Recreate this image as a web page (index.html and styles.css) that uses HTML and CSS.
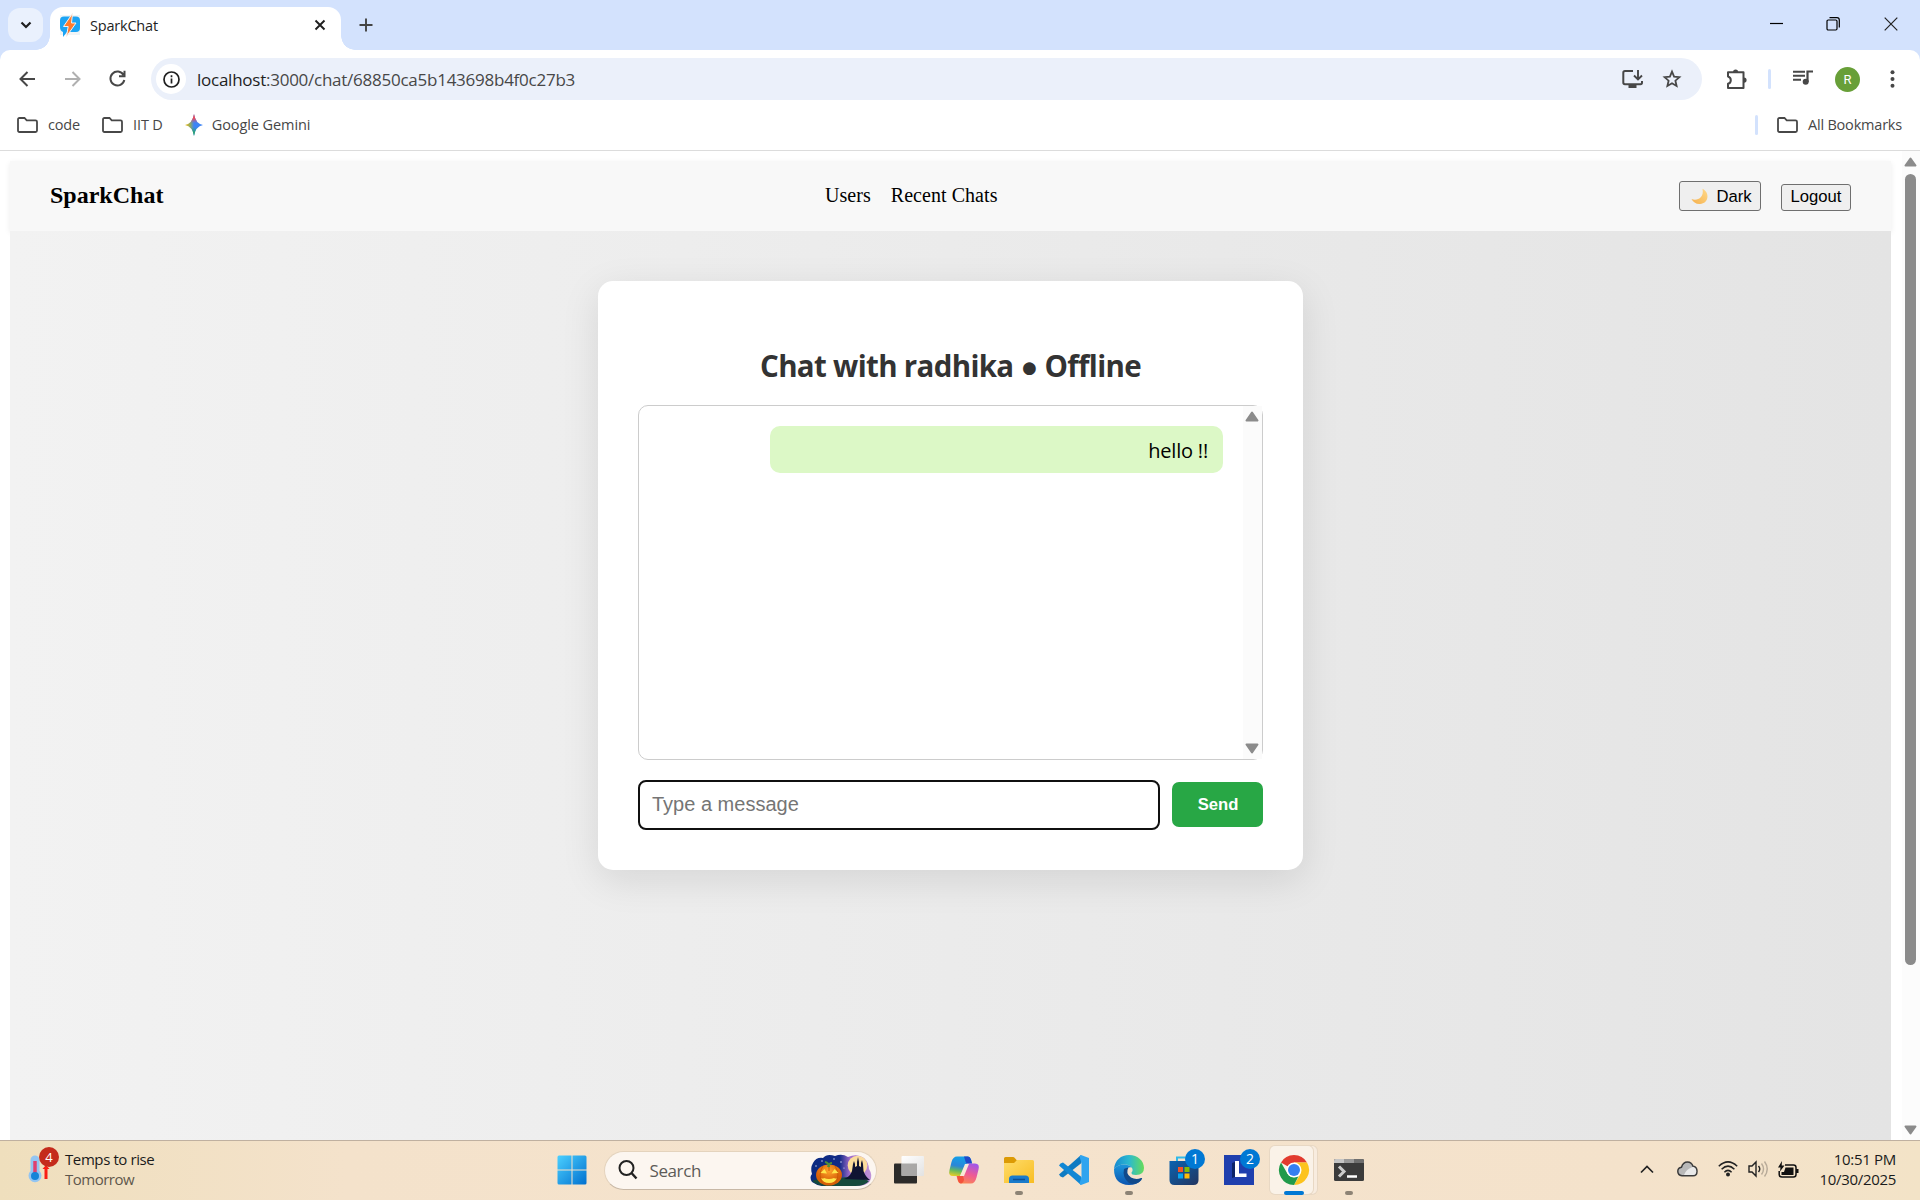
FILE: index.html
```html
<!DOCTYPE html>
<html lang="en">
<head>
<meta charset="utf-8">
<title>SparkChat</title>
<link rel="stylesheet" href="styles.css">
</head>
<body>
<header class="tabstrip">
  <button class="tab-search"><svg width="12" height="8" viewBox="0 0 12 8"><path d="M1.5 1.5 6 6l4.500-4.500" fill="none" stroke="#1f1f1f" stroke-width="2.200"/></svg></button>
  <div class="tab">
    <svg width="20" height="20" viewBox="0 0 20 20"><rect width="20" height="20" fill="#f0f4f6"/><path d="M4 1.500h12q4 0 4 4V13q0 4-4 4H7l-4 5V17Q0 16 0 12V5.500q0-4 4-4z" fill="#1ba4f5"/><path d="M12.500-1.500 3.500 11.500h4.700L6.500 21.500l9.500-13.500h-4.500z" fill="#ff7b2e" stroke="#f3f3f3" stroke-width="1"/></svg>
    <span class="tab-title">SparkChat</span>
    <svg class="tab-close" width="12" height="12" viewBox="0 0 12 12"><path d="M1.500 1.500l9 9m0-9-9 9" stroke="#1f1f1f" stroke-width="1.900"/></svg>
  </div>
  <svg class="tab-new" width="14" height="14" viewBox="0 0 14 14"><path d="M7 .500v13M.500 7h13" stroke="#444" stroke-width="1.900"/></svg>
  <div class="window-controls">
    <svg width="14" height="14" viewBox="0 0 14 14"><path d="M1 6.500h13" stroke="#000" stroke-width="1.200"/></svg>
    <svg width="14" height="14" viewBox="0 0 14 14"><rect x="1" y="3" width="10" height="10" rx="1.200" fill="none" stroke="#000" stroke-width="1.200"/><path d="M3.500.700H11q2.300 0 2.300 2.300v7.500" fill="none" stroke="#000" stroke-width="1.200"/></svg>
    <svg width="14" height="14" viewBox="0 0 14 14"><path d="M.700.700l12.600 12.600m0-12.600L.700 13.300" stroke="#222" stroke-width="1.200"/></svg>
  </div>
</header>

<div class="chrome">
  <div class="toolbar">
    <div class="nav-icons">
      <svg width="17" height="16" viewBox="0 0 17 16"><path d="M16 8H2M8.500 1 1.500 8l7 7" fill="none" stroke="#474747" stroke-width="2"/></svg>
      <svg width="17" height="16" viewBox="0 0 17 16"><path d="M1 8h14M8.500 1l7 7-7 7" fill="none" stroke="#b0b0b0" stroke-width="2"/></svg>
      <svg width="17" height="17" viewBox="0 0 17 17"><path d="M14.500 5A7 7 0 1 0 15.300 10M15.500.800V6.300H10" fill="none" stroke="#474747" stroke-width="2"/></svg>
    </div>
    <div class="omnibox">
      <span class="site-info"><svg width="17" height="17" viewBox="0 0 17 17"><circle cx="8.500" cy="8.500" r="7.500" fill="none" stroke="#1f1f1f" stroke-width="1.700"/><path d="M8.500 7.500v5M8.500 4.300v1.900" stroke="#1f1f1f" stroke-width="1.700"/></svg></span>
      <span class="url"><b>localhost</b>:3000/chat/68850ca5b143698b4f0c27b3</span>
      <svg class="install" width="21" height="20" viewBox="0 0 21 20"><path d="M11 2H3Q1.300 2 1.300 3.700V13.500Q1.300 15.300 3 15.300H18.500Q20 15.300 20 13.500V12" fill="none" stroke="#474747" stroke-width="2"/><path d="M6.500 16h8v3h-8z" fill="#474747"/><path d="M16 1v9M12 6.500l4 4 4-4" fill="none" stroke="#474747" stroke-width="1.900"/></svg>
      <svg class="star" width="20" height="20" viewBox="0 0 20 20"><path d="M10 2.600l2.100 5 5.300.500-4 3.600 1.200 5.300-4.600-2.800L5.400 17l1.200-5.300-4-3.600 5.300-.500z" fill="none" stroke="#474747" stroke-width="1.800"/></svg>
    </div>
    <svg class="puzzle" width="22" height="21" viewBox="0 0 22 21"><path d="M2 3.300H17.500V19H2V14.800Q4.800 14 4.800 11.200T2 7.500z" fill="none" stroke="#474747" stroke-width="2" stroke-linejoin="round"/><path d="M7 3a2.600 2.600 0 0 1 5.200 0zM18 8.500a2.600 2.600 0 0 1 0 5.200z" fill="#474747"/></svg>
    <i class="divider"></i>
    <svg class="media" width="20" height="16" viewBox="0 0 20 16"><path d="M0 1.700h12M0 5.700h12M0 9.700h8" stroke="#474747" stroke-width="1.900"/><path d="M14.500 12V1.500H20" fill="none" stroke="#474747" stroke-width="2.200"/><circle cx="12.700" cy="11.700" r="3" fill="#474747"/></svg>
    <span class="avatar">R</span>
    <svg class="kebab" width="5" height="18" viewBox="0 0 5 18"><g fill="#474747"><circle cx="2.500" cy="2.200" r="2"/><circle cx="2.500" cy="9" r="2"/><circle cx="2.500" cy="15.800" r="2"/></g></svg>
  </div>
  <nav class="bookmarks">
    <svg class="folder" width="21" height="16" viewBox="0 0 21 16"><path d="M1 2.500Q1 1 2.500 1H7.500l2.200 2.300H18.500Q20 3.300 20 4.800V13.500Q20 15 18.500 15h-16Q1 15 1 13.500z" fill="none" stroke="#474747" stroke-width="1.800"/></svg>
    <span class="bm bm-code">code</span>
    <svg class="folder" width="21" height="16" viewBox="0 0 21 16"><path d="M1 2.500Q1 1 2.500 1H7.500l2.200 2.300H18.500Q20 3.300 20 4.800V13.500Q20 15 18.500 15h-16Q1 15 1 13.500z" fill="none" stroke="#474747" stroke-width="1.800"/></svg>
    <span class="bm bm-iit">IIT D</span>
    <svg class="gemini" width="18" height="22" viewBox="0 0 18 22"><defs><linearGradient id="gem" x1="0" y1=".5" x2="1" y2=".5"><stop offset="0" stop-color="#fbbc05"/><stop offset=".3" stop-color="#8aa86a"/><stop offset=".5" stop-color="#3d84f5"/><stop offset="1" stop-color="#3d84f5"/></linearGradient><linearGradient id="gemv" x1="0" y1="0" x2="0" y2="1"><stop offset="0" stop-color="#f0434f"/><stop offset=".2" stop-color="#ee4a5a"/><stop offset=".42" stop-color="#b060a0" stop-opacity="0"/><stop offset=".6" stop-color="#27a566" stop-opacity="0"/><stop offset=".85" stop-color="#27a566"/></linearGradient></defs><path d="M9 0Q10.500 9.500 18 11 10.500 12.500 9 22 7.500 12.500 0 11 7.500 9.500 9 0z" fill="url(#gem)"/><path d="M9 0Q10.500 9.500 18 11 10.500 12.500 9 22 7.500 12.500 0 11 7.500 9.500 9 0z" fill="url(#gemv)"/></svg>
    <span class="bm bm-gemini">Google Gemini</span>
    <i class="divider"></i>
    <svg class="folder" width="21" height="16" viewBox="0 0 21 16"><path d="M1 2.500Q1 1 2.500 1H7.500l2.200 2.300H18.500Q20 3.300 20 4.800V13.500Q20 15 18.500 15h-16Q1 15 1 13.500z" fill="none" stroke="#474747" stroke-width="1.800"/></svg>
    <span class="bm bm-all">All Bookmarks</span>
  </nav>
</div>

<div class="viewport">
  <div class="page">
    <nav class="navbar">
      <div class="brand">SparkChat</div>
      <div class="links"><span>Users</span><span>Recent Chats</span></div>
      <div class="actions">
        <button class="btn btn-dark"><svg width="17" height="17" viewBox="0 0 17 17"><defs><linearGradient id="moon" x1="0" y1="1" x2="1" y2="0"><stop offset="0" stop-color="#f5b04c"/><stop offset="1" stop-color="#ffd98a"/></linearGradient></defs><path d="M11.500.800C19 4.500 18 15.500 9 16 5 16.200 2 14 .500 11c5 2 13-.500 11-10.200z" fill="url(#moon)"/></svg><span>Dark</span></button>
        <button class="btn btn-logout"><span>Logout</span></button>
      </div>
    </nav>
    <main class="stage">
      <section class="card">
        <h2>Chat with radhika ● Offline</h2>
        <div class="messages">
          <div class="list"><div class="bubble">hello !!</div></div>
          <div class="inner-scroll">
            <svg width="14" height="11" viewBox="0 0 14 11"><path d="M7 1.500 12.500 9.500h-11z" fill="#8b8b8b" stroke="#8b8b8b" stroke-width="2" stroke-linejoin="round"/></svg>
            <svg width="14" height="11" viewBox="0 0 14 11"><path d="M7 9.500 12.500 1.500h-11z" fill="#8b8b8b" stroke="#8b8b8b" stroke-width="2" stroke-linejoin="round"/></svg>
          </div>
        </div>
        <div class="composer">
          <div class="field">Type a message</div>
          <button class="send">Send</button>
        </div>
      </section>
    </main>
  </div>
  <div class="scrollbar">
    <svg width="13" height="10" viewBox="0 0 13 10"><path d="M6.500 1.500 11.500 8.500h-10z" fill="#8b8b8b" stroke="#8b8b8b" stroke-width="2" stroke-linejoin="round"/></svg>
    <i class="thumb"></i>
    <svg width="13" height="10" viewBox="0 0 13 10"><path d="M6.500 8.500 11.500 1.500h-10z" fill="#8b8b8b" stroke="#8b8b8b" stroke-width="2" stroke-linejoin="round"/></svg>
  </div>
</div>

<footer class="taskbar">
  <div class="weather">
    <div class="weather-icon">
      <svg width="24" height="30" viewBox="0 0 24 30"><path d="M2.500 6a4.500 4.500 0 0 1 9 0V17a6.500 6.500 0 1 1-9 0z" fill="#93c5f2"/><path d="M7 7v14" stroke="#e0406e" stroke-width="3.500"/><circle cx="7" cy="22" r="4" fill="#1684d8"/><path d="M18 14v11" stroke="#f91e14" stroke-width="3"/><path d="M14.500 15 18 11l3.500 4z" fill="#f91e14"/></svg>
      <span class="badge-red">4</span>
    </div>
    <div class="weather-text"><span class="w1">Temps to rise</span><span class="w2">Tomorrow</span></div>
  </div>
  <div class="apps">
    <div class="app"><svg width="30" height="30" viewBox="0 0 30 30"><defs><linearGradient id="win" x1="0" y1="0" x2="1" y2="1" gradientUnits="objectBoundingBox"><stop offset="0" stop-color="#4bd0ff"/><stop offset="1" stop-color="#0070cf"/></linearGradient></defs><path d="M2 .500h12.500v14H.500V2Q.500.500 2 .500zM15.500.500H28q1.500 0 1.500 1.500v12.500h-14zM.500 15.500h14v14H2q-1.500 0-1.500-1.500zM15.500 15.500h14V28q0 1.500-1.500 1.500H15.500z" fill="url(#win)"/></svg></div>
    <div class="search">
      <svg width="20" height="20" viewBox="0 0 20 20"><circle cx="8.500" cy="8" r="7" fill="none" stroke="#222" stroke-width="2"/><path d="M13.500 13l5 5.500" stroke="#222" stroke-width="2.400"/></svg>
      <span class="search-text">Search</span>
      <svg class="art" width="62" height="33" viewBox="0 0 62 33">
        <defs><linearGradient id="sky"><stop offset="0" stop-color="#0a2a80"/><stop offset=".48" stop-color="#122a86"/><stop offset=".65" stop-color="#a06ccc"/><stop offset="1" stop-color="#c092d8"/></linearGradient><radialGradient id="pump" cy=".3"><stop offset="0" stop-color="#ffa52a"/><stop offset="1" stop-color="#d85f08"/></radialGradient></defs>
        <path d="M3 9Q6 3 13 4 17-1 25 2 32-1 38 3 47-1 54 4q5 5 5 11 4 6 1 12-3 5-14 5H12q-6-1-10-4-3-5 0-8-2-6 1-11z" fill="url(#sky)"/>
        <circle cx="47.500" cy="11.500" r="9.800" fill="#fbdc9c"/>
        <path d="M2 27q14-6 28-3 16-3 29 3-4 5-14 5H14q-8-1-12-5z" fill="#164a3c"/>
        <path d="M34 25q6-2 8-8l1-7 1-3 1 3v3l2-1V8l1-5 1 5v4l2 1V9l1-3 1 4 .500 7q2 6 6.500 9z" fill="#101432"/>
        <g fill="#dfe7ff"><circle cx="6" cy="12" r=".7"/><circle cx="12" cy="7" r=".7"/><circle cx="24" cy="5" r=".7"/><circle cx="31" cy="8" r=".7"/><circle cx="34" cy="14" r=".6"/></g>
        <ellipse cx="19" cy="21" rx="13" ry="10.500" fill="url(#pump)"/>
        <path d="M13 12q-6 9 0 18M25 12q6 9 0 18M19 12v5" stroke="#c85a06" fill="none"/>
        <path d="M19 13q0-4-4-5M18 13q1-4 4-4" stroke="#4d8f3a" stroke-width="2" fill="none"/>
        <path d="M10.500 19l4-4 2.500 4.500zM21.500 19.500l3-4.500 4 4zM11 24q2 1 3 0 5 2 10 0 2 1 3 0-2 5-8 5t-8-5z" fill="#ffe54a"/>
      </svg>
    </div>
    <div class="app"><svg width="30" height="30" viewBox="0 0 30 30"><defs><linearGradient id="tv" x1="0" x2="1" y2="1"><stop offset="0" stop-color="#fff"/><stop offset="1" stop-color="#e2e2e2"/></linearGradient></defs><rect y="8.500" width="23" height="20" rx="1" fill="#2c2b2a"/><rect x="7.500" y="1" width="22.500" height="20" rx="1" fill="url(#tv)"/><path d="M7.500 8.500H23V21H7.500z" fill="#9c9b9a" opacity=".85"/></svg></div>
    <div class="app"><svg width="30" height="30" viewBox="0 0 30 30"><defs><linearGradient id="cp1" x1=".3" x2=".1" y2="1"><stop offset="0" stop-color="#159fe8"/><stop offset=".45" stop-color="#2a86d8"/><stop offset=".7" stop-color="#65b95e"/><stop offset="1" stop-color="#f3cf22"/></linearGradient><linearGradient id="cp2" x1=".7" x2=".3" y2="1"><stop offset="0" stop-color="#a256e8"/><stop offset=".5" stop-color="#ee5a95"/><stop offset="1" stop-color="#fb8850"/></linearGradient></defs><path d="M8 1.500h11q2 0 3 3l1 4h-5L11 21H4q-5 0-3.500-6l2-8Q4 1.500 8 1.500z" fill="url(#cp1)"/><path d="M15 1.500h4q2 0 3 3l1 4h-4q-2 0-2.500-2z" fill="#2049c8"/><path d="M22 28.500H12q-2.500 0-3.200-3L7.500 21H12L18.500 8.500H26q5 0 3.500 6l-2 8q-1.500 6-5.500 6z" fill="url(#cp2)"/><path d="M14 21h-6l1 4.500q1 3 3 3 2.500-.500 3-4z" fill="#f4523d"/><path d="M16 9h4l-5 12h-4z" fill="#fae9d8"/></svg></div>
    <div class="app"><svg width="30" height="30" viewBox="0 0 30 30"><defs><linearGradient id="fd" x2="1" y2="1"><stop offset="0" stop-color="#ffdc6a"/><stop offset="1" stop-color="#f8bd22"/></linearGradient></defs><path d="M0 3.500Q0 2 1.500 2H9q1 0 2 1.300L13 5.500V10H0z" fill="#dc9a05"/><path d="M0 8h10l3-3h15.500Q30 5 30 6.500V28H0z" fill="url(#fd)"/><path d="M5 28v-4q0-3.500 3.500-3.500h13q3.500 0 3.500 3.500v4z" fill="#1a7bcb"/><path d="M9 24.500h12" stroke="#0c4f95" stroke-width="1.500"/></svg><i class="dot"></i></div>
    <div class="app"><svg width="30" height="30" viewBox="0 0 30 30"><path d="M22 0 22.500 8 4 22.500 1.500 21.500 0 19.500z" fill="#0f7bc2"/><path d="M22 30 22.500 22 4 7.500 1.500 8.500 0 10.500z" fill="#1187d4"/><path d="M22 0 30 3V27L22 30 20.500 28.500 22.500 22V8L20.500 1.500z" fill="#2fa4ef"/></svg></div>
    <div class="app"><svg width="30" height="30" viewBox="0 0 30 30"><defs><linearGradient id="e1" x1="0" x2="1"><stop offset="0" stop-color="#1689d2"/><stop offset=".5" stop-color="#2cb9cf"/><stop offset="1" stop-color="#66dc5a"/></linearGradient><linearGradient id="e2" x2="0" y2="1"><stop offset="0" stop-color="#1c96dc"/><stop offset="1" stop-color="#0c55b0"/></linearGradient></defs><path d="M0 14C1 5 7 0 15 0 24 0 30 6 30 13q0 7-8 7-5 0-4.500-2.500Q19 16 18.500 14 17 9.500 10 9.500 4 9.500 0 14z" fill="url(#e1)"/><path d="M0 14q4-5 11-4.500 5 .500 7 3-6-1-6 5 1 8 9 9 4 0 7-2-5 5.500-13 5.500Q0 29.500 0 14z" fill="url(#e2)"/><path d="M10 14q-2 8 5 14 8 3 13-4 .500-1.500-1-1-5 2-10-.500-6-4-2.500-10Q11 13 10 14z" fill="#114a8b"/></svg><i class="dot"></i></div>
    <div class="app"><svg width="30" height="30" viewBox="0 0 30 30"><defs><linearGradient id="st" y2="1"><stop offset="0" stop-color="#0a63b0"/><stop offset="1" stop-color="#233560"/></linearGradient></defs><path d="M8 7V2.500H20" fill="none" stroke="#31b9e8" stroke-width="2"/><path d="M.500 6h29V25q0 5-5 5h-19q-5 0-5-5z" fill="url(#st)"/><path d="M9 12h5v5H9z" fill="#f35325"/><path d="M15.500 12h5v5h-5z" fill="#81bc06"/><path d="M9 18.500h5v5H9z" fill="#05a6f0"/><path d="M15.500 18.500h5v5h-5z" fill="#ffba08"/></svg><b class="badge">1</b></div>
    <div class="app"><svg width="30" height="30" viewBox="0 0 30 30"><path d="M0 0h30v30H0z" fill="#1f3fae"/><path d="M8 8l3-1v15l-3 1z" fill="#0c2467"/><path d="M11 6h4v12.500h7.500V22H11z" fill="#fff"/></svg><b class="badge">2</b></div>
    <div class="app app-active"><svg width="30" height="30" viewBox="0 0 30 30"><path d="M15 15 2 7.500A15 15 0 0 1 28 7.500H15z" fill="#e23a2e"/><path d="M15 7.500H28A15 15 0 0 1 15 30l6.500-11.200z" fill="#fcc31e"/><path d="M2 7.500l6.500 11.300q4 5.500 11 2.500L15 30A15 15 0 0 1 2 7.500z" fill="#219a4a"/><circle cx="15" cy="15" r="7.500" fill="#fff"/><circle cx="15" cy="15" r="6" fill="#347ff0"/></svg><i class="dot dot-active"></i></div>
    <div class="app"><svg width="30" height="30" viewBox="0 0 30 30"><rect y="4" width="30" height="22" rx="1.500" fill="#3b3b3b"/><path d="M0 8V5.500Q0 4 1.500 4H10v4z" fill="#c5c5c5"/><path d="M10 4h10v4H10z" fill="#999"/><path d="M20 4h8.500Q30 4 30 5.500V8H20z" fill="#6e6e6e"/><path d="M5 11.500l5 5-5 5" fill="none" stroke="#ccc" stroke-width="3"/><path d="M13 21.500h10" stroke="#fff" stroke-width="2.500"/></svg><i class="dot"></i></div>
  </div>
  <div class="tray">
    <svg class="chev" width="14" height="9" viewBox="0 0 14 9"><path d="M1 7.500 7 1.500l6 6" fill="none" stroke="#222" stroke-width="1.700"/></svg>
    <svg class="cloud" width="21" height="16" viewBox="0 0 21 16"><path d="M5 14.800Q.800 14.300.800 10.300.800 6.800 4.500 6.200 6 1 10.500 1q4 0 5.500 4.200 4 .600 4 5 0 4.600-4 4.600z" fill="#b9b9b9" stroke="#3c3c3c" stroke-width="1.500"/><path d="M7 14q2-6 9-8.300 3.200 1 3.200 4.500T16 14z" fill="#e9e9e9"/></svg>
    <svg class="wifi" width="20" height="16" viewBox="0 0 20 16"><g fill="none" stroke="#222" stroke-width="1.500"><path d="M.800 5.300Q10-3.500 19.200 5.300M3.600 8.300Q10 2 16.400 8.300M6.400 11.200Q10 7.600 13.600 11.200"/></g><circle cx="10" cy="13.500" r="2" fill="#222"/></svg>
    <svg class="vol" width="21" height="18" viewBox="0 0 21 18"><path d="M1 6H4L8 2V16L4 12H1z" fill="none" stroke="#222" stroke-width="1.400"/><path d="M10.500 6q2.500 3 0 6" fill="none" stroke="#222" stroke-width="1.400"/><path d="M13.500 3.500q4 5.500 0 11M16.500 1.500q5.500 7.500 0 15" fill="none" stroke="#b7aa98" stroke-width="1.400"/></svg>
    <svg class="bat" width="21" height="17" viewBox="0 0 21 17"><path d="M7 4H15.500Q18 4 18 6.500V13.500Q18 16 15.500 16H4Q1.200 16 1.200 13.500V10" fill="none" stroke="#111" stroke-width="1.500"/><path d="M18 8h2.500v4H18zM7.500 6.500h8v7.500h-12V11H6z" fill="#111"/><path d="M4 0 0 6.500h2.500L2 10.500 6.500 4.500H3.700z" fill="#111"/></svg>
    <div class="clock"><span>10:51 PM</span><span>10/30/2025</span></div>
  </div>
</footer>
</body>
</html>
```
FILE: styles.css
```css
* { box-sizing: border-box; }
body { margin: 0; width: 1920px; height: 1200px; overflow: hidden; display: flex; flex-direction: column; background: #fff; font-family: "Open Sans", sans-serif; color: #1f1f1f; white-space: nowrap; }
svg { display: block; flex: none; overflow: visible; }
button { font: inherit; padding: 0; border: 0; margin: 0; }

/* tab strip */
.tabstrip { height: 50px; background: #d3e2fd; display: flex; align-items: flex-start; flex: none; }
.tab-search { width: 35px; height: 34px; margin: 8px 7px 0 8px; border-radius: 12px; background: #eaf1fd; display: grid; place-items: center; }
.tab { position: relative; width: 291px; height: 43px; margin-top: 7px; padding: 0 15px 7px 10px; border-radius: 13px 13px 0 0; background: #fff; display: flex; align-items: center; }
.tab::before, .tab::after { content: ""; position: absolute; bottom: 0; width: 14px; height: 14px; }
.tab::before { left: -14px; background: radial-gradient(circle at 0 0, transparent 13.5px, #fff 14px); }
.tab::after { right: -14px; background: radial-gradient(circle at 100% 0, transparent 13.5px, #fff 14px); }
.tab-title { margin-left: 10px; font-size: 14.500px; letter-spacing: -.2px; }
.tab-close { margin-left: auto; }
.tab-new { margin: 18px 0 0 18px; }
.window-controls { display: flex; gap: 43px; margin: 17px 22px 0 auto; }
.window-controls svg:last-child { margin-left: 1px; }

/* toolbar */
.chrome { position: relative; height: 101px; flex: none; background: #fff; border-bottom: 1px solid #dcdcdc; border-radius: 10px 10px 0 0; }
.chrome::before { content: ""; position: absolute; z-index: -1; inset: 0 0 auto; height: 12px; background: #d3e2fd; }
.toolbar { display: flex; align-items: center; height: 58px; padding-right: 25px; }
.nav-icons { display: flex; gap: 28px; padding: 0 0 1px 19px; width: 151px; align-items: center; }
.omnibox { width: 1551px; height: 42px; border-radius: 21px; background: #ebf0fa; display: flex; align-items: center; padding: 0 20px 0 5px; }
.site-info { width: 30px; height: 30px; border-radius: 50%; background: #fff; display: grid; place-items: center; }
.url { margin-left: 11px; font-size: 17px; letter-spacing: -.25px; color: #474747; }
.url b { font-weight: 400; color: #1f1f1f; }
.install { margin-left: auto; margin-right: 19px; }
.divider { width: 3px; height: 20px; border-radius: 2px; background: #d3e2fd; }
.puzzle { margin: 0 20px 0 24px; }
.media { margin: 0 22px 3px 22px; }
.avatar { width: 25px; height: 25px; border-radius: 50%; background: #689f38; color: #fff; font: 13px/25px Roboto, sans-serif; text-align: center; }
.kebab { margin-left: auto; }
.bookmarks { display: flex; align-items: center; height: 34px; padding: 0 18px 0 17px; }
.bm { position: relative; top: -1px; font-size: 14.500px; letter-spacing: -.15px; color: #474747; margin-left: 10px; }
.bm-code { margin-right: 22px; }
.bm-iit { margin-right: 22px; }
.bm-gemini { margin-left: 9px; letter-spacing: -.08px; }
.bm-all { letter-spacing: -.2px; }
.bookmarks .divider { margin: 0 19px 0 auto; }

/* web page */
.viewport { flex: 1; display: flex; min-height: 0; }
.page { width: 1902px; padding: 10px 11px 0 10px; display: flex; flex-direction: column; }
.navbar { height: 70px; flex: none; position: relative; padding: 0 40px; display: grid; grid-template-columns: 775px 1fr auto; align-items: center; background: #f8f8f8; box-shadow: 0 2px 6px rgba(0,0,0,.08); font-family: "Liberation Serif", serif; color: #000; }
.brand { font-size: 24px; font-weight: 700; padding-bottom: 2px; }
.links { display: flex; gap: 20px; font-size: 20px; padding-bottom: 1px; letter-spacing: .05px; }
.actions { display: flex; gap: 20px; align-items: flex-end; }
.btn { display: flex; align-items: center; justify-content: center; background: #efefef; border: 1px solid #6f6f6f; border-radius: 3px; font: 16.670px "Liberation Sans", sans-serif; color: #000; height: 27px; }
.btn-dark { width: 82px; height: 30px; gap: 8px; padding: 1px 0 0 3px; }
.btn-logout { width: 70px; padding-bottom: 2px; }
.stage { position: relative; flex: 1; background: linear-gradient(90deg, #f2f2f2, #e4e4e4); padding-top: 50px; }
.card { width: 705px; height: 589px; margin: 0 auto; padding: 62px 40px 40px; background: #fff; border-radius: 15px; box-shadow: 0 10px 38px rgba(0,0,0,.1); display: flex; flex-direction: column; }
h2 { margin: 0 0 20px; height: 42px; font: 700 29.500px/46px "Open Sans", sans-serif; letter-spacing: -.68px; color: #333; text-align: center; }
.messages { height: 355px; border: 1px solid #ccc; border-radius: 10px; display: flex; }
.list { flex: 1; padding: 20px 20px 0; }
.bubble { width: 453px; height: 47px; margin-left: auto; padding: 0 15px; border-radius: 10px; background: #dcf8c6; font-size: 20px; letter-spacing: -.2px; line-height: 50px; text-align: right; color: #000; }
.inner-scroll { width: 19px; background: #fbfbfb; display: flex; flex-direction: column; justify-content: space-between; align-items: center; padding: 5px 1px 5px 0; }
.composer { display: flex; align-items: flex-start; margin-top: 20px; gap: 12px; }
.field { width: 522px; height: 50px; border: 2px solid #101010; border-radius: 8px; padding-left: 12px; font: 20px/44px "Liberation Sans", sans-serif; color: #757575; }
.send { width: 91px; height: 45px; margin-top: 2px; padding-left: 1px; border-radius: 7px; background: #28a745; color: #fff; font: 700 16.670px "Liberation Sans", sans-serif; }
.scrollbar { width: 18px; background: #fcfcfc; display: flex; flex-direction: column; align-items: center; padding: 6px 1px 5px 0; }
.scrollbar svg:last-child { margin-top: auto; }
.thumb { width: 11px; height: 791px; margin-top: 7px; border-radius: 6px; background: #8b8b8b; }

/* taskbar */
.taskbar { height: 60px; flex: none; border-top: 1px solid #bfb0a0; background: linear-gradient(90deg, #efdfbd, #f4e2cb 18%, #f5e3cd 50%, #f4e2cb 85%, #f3e3c7); display: grid; grid-template-columns: 544px auto 1fr; }
.weather { display: flex; align-items: center; padding-left: 28px; }
.weather-icon { position: relative; width: 37px; top: -2px; }
.badge-red { position: absolute; left: 11px; top: -7px; width: 20px; height: 20px; border-radius: 50%; background: #c42b1c; color: #fff; font-size: 13px; line-height: 20px; text-align: center; }
.weather-text { display: flex; flex-direction: column; font-size: 15px; line-height: 20px; padding-bottom: 4px; }
.w1 { color: #1b1b1b; letter-spacing: -.4px; }
.w2 { color: #5f584c; letter-spacing: -.5px; }
.apps { display: flex; align-items: center; padding-bottom: 1px; }
.app { position: relative; width: 55px; height: 58px; display: grid; place-items: center; }
.app svg { z-index: 1; }
.search { width: 273px; height: 39px; margin: 0 4.500px; border: 1px solid #e4d3bd; border-bottom-color: #c8b8a6; border-radius: 20px; background: #fcf6f0; display: flex; align-items: center; padding: 0 4px 0 13px; }
.search-text { margin-left: 12px; font-size: 17px; letter-spacing: -.4px; color: #5d5b58; }
.art { margin-left: auto; }
.dot { position: absolute; bottom: 4px; width: 8px; height: 4px; border-radius: 2px; background: #8d8375; z-index: 2; }
.dot-active { width: 20px; background: #0078d4; }
.badge { position: absolute; z-index: 2; left: 29px; top: 8px; width: 20px; height: 20px; border-radius: 50%; background: #0078d4; color: #fff; font-size: 14px; font-weight: 400; line-height: 20px; text-align: center; }
.app-active::before { content: ""; position: absolute; left: 4px; top: 5px; width: 43px; height: 48px; border-radius: 5px; background: #faf2e8; box-shadow: 0 0 0 1px #e8d8c4; z-index: 1; }
.app-active::after { content: ""; position: absolute; left: 20px; top: 5px; width: 31px; height: 48px; border-radius: 5px; background: #f8ecdf; box-shadow: 0 0 0 1px #e8d8c4; }
.tray { display: flex; align-items: center; justify-content: flex-end; padding: 0 24px 3px 0; }
.cloud { margin: 0 20px 0 23px; }
.vol { margin: 0 9px 0 10px; }
.clock { width: 97px; display: flex; flex-direction: column; align-items: flex-end; font-size: 15px; letter-spacing: -.3px; line-height: 20px; color: #1b1b1b; }
```
